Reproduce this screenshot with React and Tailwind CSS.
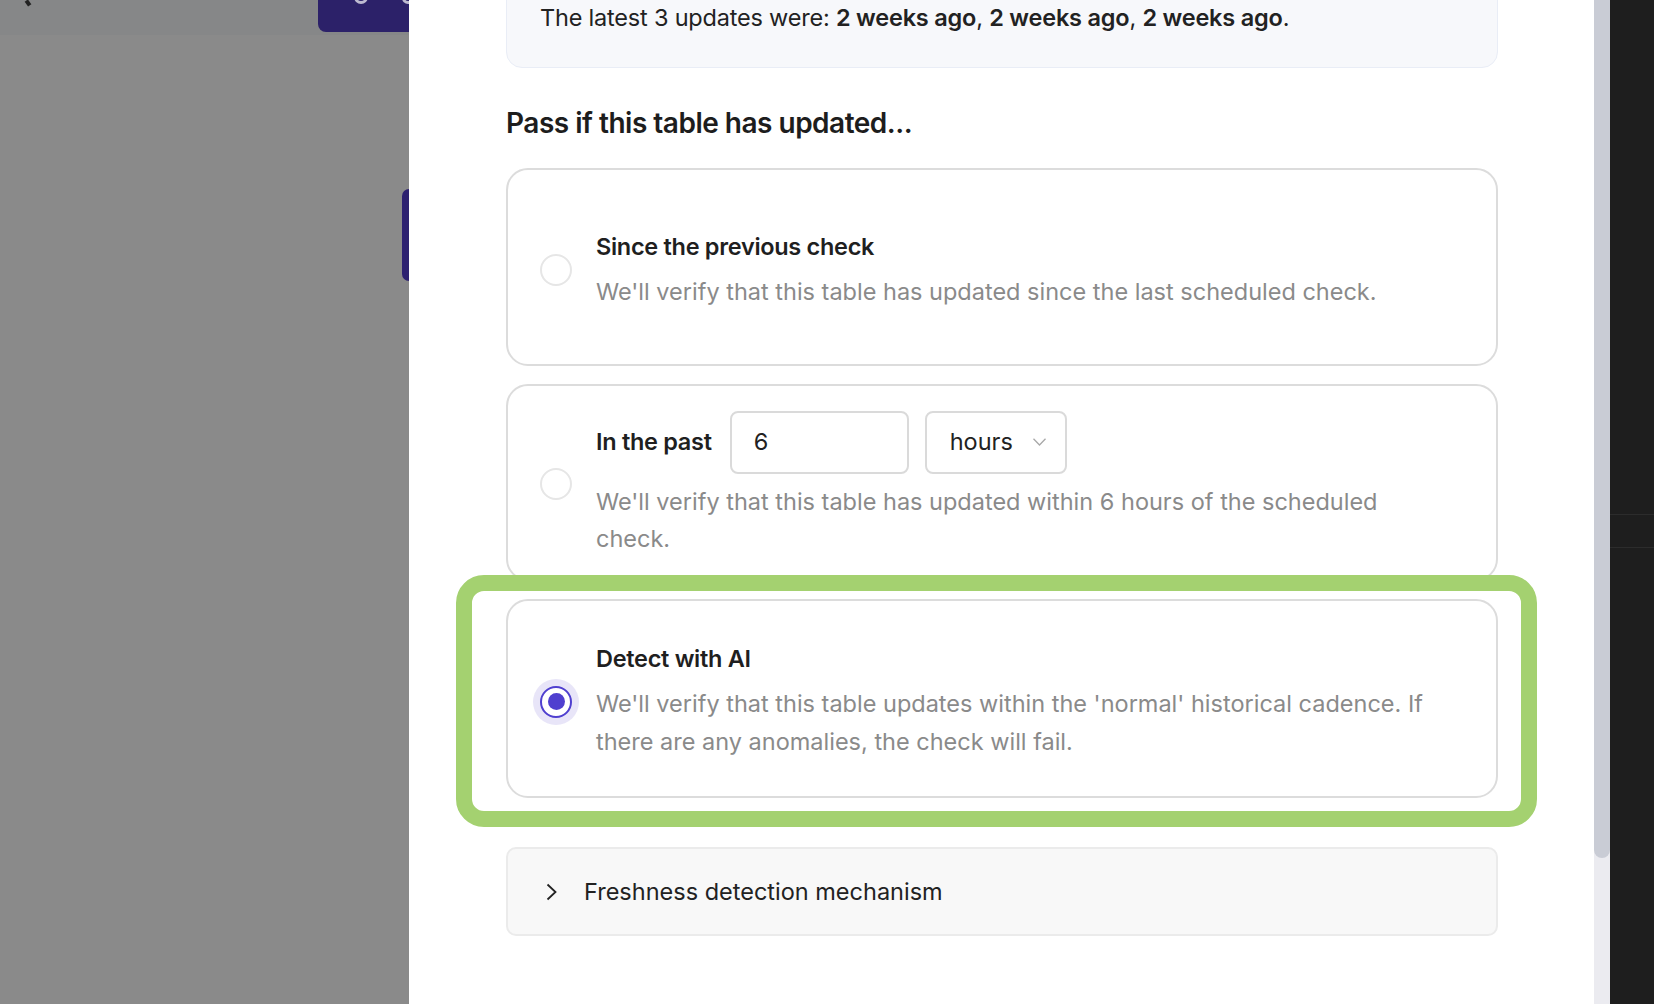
import React from "react";

function Radio({ selected }) {
  if (selected) {
    return (
      <div className="relative flex h-[32px] w-[32px] shrink-0 items-center justify-center">
        <div className="absolute -inset-[7px] rounded-full bg-[#e8e5f8]" />
        <div className="relative flex h-[32px] w-[32px] items-center justify-center rounded-full border-[2.5px] border-[#4f3fcf] bg-white">
          <div className="h-[17px] w-[17px] rounded-full bg-[#4f3fcf]" />
        </div>
      </div>
    );
  }
  return <div className="h-[32px] w-[32px] shrink-0 rounded-full border-2 border-[#e6e6e6] bg-white" />;
}

export default function App() {
  const font = { fontFamily: "Inter, 'Noto Sans', sans-serif" };
  return (
    <div className="flex h-[1004px] w-[1654px] overflow-hidden" style={font}>
      {/* Backdrop */}
      <div className="relative w-[409px] shrink-0 bg-[#8a8a8a]">
        <div className="h-[35px] bg-[#868788]" />
        <div className="absolute left-[26px] top-0 h-[6px] w-[4px] rotate-[-35deg] bg-[#222]" />
        <div className="absolute left-[318px] top-0 h-[32px] w-[91px] overflow-hidden rounded-bl-[8px] bg-[#2c2169]">
          <div className="absolute left-[36px] -top-[10px] h-[14px] w-[14px] rounded-full border-[3px] border-[#bdbad0]" />
          <div className="absolute left-[84px] -top-[8px] h-[12px] w-[12px] rounded-full border-[3px] border-[#bdbad0]" />
        </div>
        <div className="absolute left-[402px] top-[189px] h-[92px] w-[7px] rounded-l-[8px] bg-[#2d2170]" />
      </div>

      {/* Modal */}
      <div className="w-[1185px] shrink-0 bg-white pl-[97px]">
        <div className="w-[992px]">
          {/* Info box */}
          <div className="-mt-[20px] h-[88px] rounded-b-[16px] border border-[#e9edf6] bg-[#f7f8fb] px-[33px] pt-[20px] text-[23.5px] leading-[34px] text-[#222] tracking-[-0.2px]">
            The latest 3 updates were: <span className="font-semibold">2 weeks ago</span>,{" "}
            <span className="font-semibold">2 weeks ago</span>, <span className="font-semibold">2 weeks ago</span>.
          </div>

          <div className="mt-[39px] text-[28px] font-semibold leading-[32px] tracking-[-0.5px] text-[#1d1d1d]">
            Pass if this table has updated...
          </div>

          {/* Card 1 */}
          <div className="mt-[29px] flex h-[198px] items-center gap-[24px] rounded-[22px] border-2 border-[#dcdcdc] pl-[32px] pt-[6px]">
            <Radio />
            <div className="flex flex-col gap-[10px]">
              <div className="text-[23.5px] font-semibold leading-[32px] tracking-[-0.3px] text-[#1f1f1f]">
                Since the previous check
              </div>
              <div className="text-[23.5px] leading-[37px] text-[#8a8a8a]">
                We'll verify that this table has updated since the last scheduled check.
              </div>
            </div>
          </div>

          {/* Card 2 */}
          <div className="mt-[18px] flex h-[197px] items-center gap-[24px] rounded-[22px] border-2 border-[#dcdcdc] pl-[32px] pt-[2px]">
            <Radio />
            <div className="flex flex-col gap-[9px]">
              <div className="flex items-center">
                <div className="text-[23.5px] font-semibold leading-[32px] tracking-[-0.3px] text-[#1f1f1f]">
                  In the past
                </div>
                <div className="ml-[18px] flex h-[63px] w-[179px] items-center rounded-[8px] border-2 border-[#dadada] pl-[22px] text-[23.5px] text-[#222]">
                  6
                </div>
                <div className="ml-[16px] flex h-[63px] w-[142px] items-center rounded-[8px] border-2 border-[#dadada] pl-[23px] text-[23.5px] text-[#222]">
                  hours
                  <svg className="ml-[20px]" width="13" height="8" viewBox="0 0 13 8" fill="none">
                    <path d="M0.5 0.8 L6.5 7 L12.5 0.8" stroke="#a8a8a8" strokeWidth="1.3" />
                  </svg>
                </div>
              </div>
              <div className="text-[23.5px] leading-[37px] text-[#8a8a8a]">
                We'll verify that this table has updated within 6 hours of the scheduled
                <br />
                check.
              </div>
            </div>
          </div>

          {/* Card 3 with highlight frame */}
          <div className="relative mt-[18px]">
            <div className="absolute -bottom-[29px] -left-[50px] -right-[39px] -top-[24px] rounded-[28px] border-[16px] border-[#a4d170] bg-white" />
            <div className="relative flex h-[199px] items-center gap-[24px] rounded-[22px] border-2 border-[#dcdcdc] bg-white pl-[32px] pt-[6px]">
              <Radio selected />
              <div className="flex flex-col gap-[10px]">
                <div className="text-[23.5px] font-semibold leading-[32px] tracking-[-0.3px] text-[#1f1f1f]">
                  Detect with AI
                </div>
                <div className="text-[23.5px] leading-[38px] text-[#8a8a8a]">
                  We'll verify that this table updates within the 'normal' historical cadence. If
                  <br />
                  there are any anomalies, the check will fail.
                </div>
              </div>
            </div>
          </div>

          {/* Collapsible */}
          <div className="mt-[49px] flex h-[89px] items-center rounded-[10px] border-2 border-[#ebebeb] bg-[#f8f8f8] pl-[37px]">
            <svg width="14" height="18" viewBox="0 0 14 18" fill="none">
              <path d="M2.5 1.5 L10.5 9 L2.5 16.5" stroke="#222" strokeWidth="1.8" />
            </svg>
            <div className="ml-[25px] text-[23.5px] leading-[32px] text-[#222]">Freshness detection mechanism</div>
          </div>
        </div>
      </div>

      {/* Scrollbar */}
      <div className="flex w-[16px] shrink-0 flex-col bg-[#ebebf0]">
        <div className="h-[858px] rounded-b-[8px] bg-[#c9ccd5]" />
      </div>

      {/* Dark strip */}
      <div className="flex w-[44px] shrink-0 flex-col bg-[#1e1e1e]">
        <div className="h-[514px]" />
        <div className="h-px bg-[#2c2c2c]" />
        <div className="h-[32px]" />
        <div className="h-px bg-[#2c2c2c]" />
      </div>
    </div>
  );
}
